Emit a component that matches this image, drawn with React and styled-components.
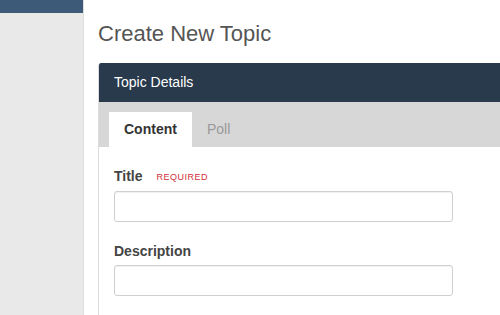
import React, { useState } from "react";
import styled, { createGlobalStyle } from "styled-components";

const GlobalStyle = createGlobalStyle`
  body {
    margin: 0;
    font-family: "Liberation Sans", Arial, sans-serif;
    background: #fff;
  }
`;

function App() {
  const [tab, setTab] = useState("content");
  return (
    <Page>
      <GlobalStyle />
      <Sidebar>
        <SideTop />
      </Sidebar>
      <Main>
        <PageTitle>Create New Topic</PageTitle>
        <Panel>
          <PanelHeader>Topic Details</PanelHeader>
          <Tabs>
            <Tab active={tab === "content"} onClick={() => setTab("content")}>
              Content
            </Tab>
            <Tab active={tab === "poll"} onClick={() => setTab("poll")}>
              Poll
            </Tab>
          </Tabs>
          <PanelBody>
            <Field>
              <Label>
                Title <Required>REQUIRED</Required>
              </Label>
              <Input type="text" />
            </Field>
            <Field>
              <Label>Description</Label>
              <Input type="text" />
            </Field>
          </PanelBody>
        </Panel>
      </Main>
    </Page>
  );
}

export default App;

const Page = styled.div`
  display: flex;
  height: 315px;
  overflow: hidden;
`;

const Sidebar = styled.div`
  width: 83px;
  flex-shrink: 0;
  background: #e9e9e9;
  border-right: 1px solid #dedede;
`;

const SideTop = styled.div`
  height: 13px;
  background: #3d5a78;
`;

const Main = styled.div`
  flex: 1;
  padding: 21px 0 0 14px;
  overflow: hidden;
`;

const PageTitle = styled.h1`
  margin: 0 0 16px 0;
  font-size: 22px;
  line-height: 26px;
  font-weight: normal;
  color: #555;
`;

const Panel = styled.div`
  border-left: 1px solid #dcdcdc;
  border-radius: 3px 0 0 0;
  overflow: hidden;
`;

const PanelHeader = styled.div`
  height: 39px;
  line-height: 39px;
  padding-left: 15px;
  background: #283a4b;
  color: #fff;
  font-size: 14px;
`;

const Tabs = styled.div`
  display: flex;
  height: 45px;
  padding: 10px 0 0 10px;
  box-sizing: border-box;
  background: #d7d7d7;
`;

const Tab = styled.div`
  padding: 0 15px;
  line-height: 35px;
  font-size: 14px;
  font-weight: ${(p) => (p.active ? "bold" : "normal")};
  color: ${(p) => (p.active ? "#333" : "#999")};
  background: ${(p) => (p.active ? "#fff" : "transparent")};
  cursor: pointer;
`;

const PanelBody = styled.div`
  padding: 20px 15px 0 15px;
`;

const Field = styled.div`
  margin-bottom: 20px;
`;

const Label = styled.div`
  font-size: 14px;
  line-height: 18px;
  font-weight: bold;
  color: #444;
  margin-bottom: 5px;
`;

const Required = styled.span`
  margin-left: 10px;
  font-size: 9px;
  font-weight: normal;
  letter-spacing: 0.5px;
  color: #d0303a;
  vertical-align: 1px;
`;

const Input = styled.input`
  display: block;
  width: 339px;
  height: 31px;
  box-sizing: border-box;
  border: 1px solid #cfcfcf;
  border-radius: 3px;
  box-shadow: inset 0 1px 1px rgba(0, 0, 0, 0.06);
  background: #fff;
  margin: 0;
`;
